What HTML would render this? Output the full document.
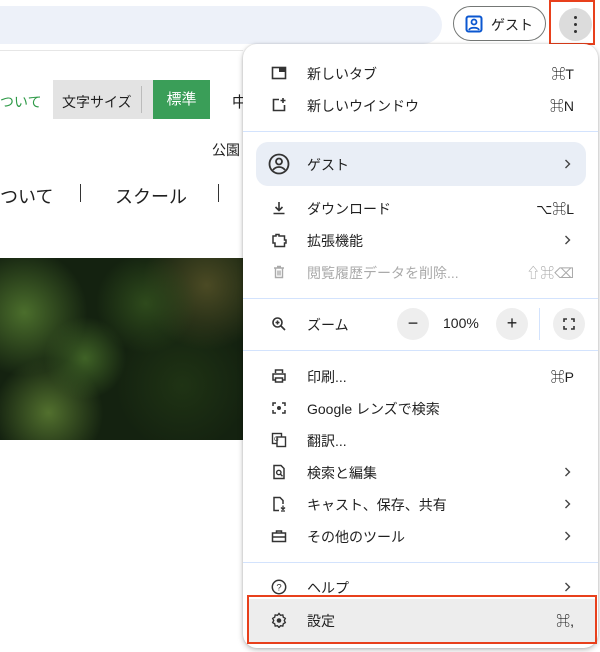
<!DOCTYPE html>
<html><head><meta charset="utf-8"><style>
body{margin:0;width:600px;height:652px;background:#fff;position:relative;overflow:hidden;font-family:"Liberation Sans","Noto Sans CJK JP",sans-serif;color:#1f1f1f}
.a{position:absolute}
.row{position:absolute;left:243px;width:355px;height:32px;font-size:14px}
.row .ic{position:absolute;left:28px;top:8px;width:16px;height:16px}
.row .t{position:absolute;left:64px;top:7px}
.row .k{position:absolute;right:24px;top:7px;font-size:14px}
.row .ch{position:absolute;right:27px;top:11px;width:7px;height:10px}
.div{position:absolute;left:243px;width:355px;height:1px;background:#d3e3fd}
</style></head><body>
<div class="a" style="left:0;top:6px;width:442px;height:38px;background:#edf1f9;border-radius:0 19px 19px 0"></div>
<div class="a" style="left:453px;top:6px;width:93px;height:35px;border:1px solid #747775;border-radius:19px;box-sizing:border-box"></div>
<svg class="a" style="left:465px;top:15px" width="18" height="18" viewBox="0 0 18 18"><rect x="1.5" y="1.5" width="15" height="15" rx="2" fill="none" stroke="#0b57d0" stroke-width="2"/><circle cx="9" cy="7" r="2.5" fill="none" stroke="#0b57d0" stroke-width="1.8"/><path d="M4 15c1-3 9-3 10 0" fill="none" stroke="#0b57d0" stroke-width="1.8"/></svg>
<div class="a" style="left:491px;top:15px;font-size:14px">ゲスト</div>
<div class="a" style="left:559px;top:8px;width:33px;height:33px;border-radius:50%;background:#dcdcdc"></div>
<div class="a" style="left:574px;top:16px;width:3px;height:3px;border-radius:50%;background:#333;box-shadow:0 7px 0 #333,0 14px 0 #333"></div>
<div class="a" style="left:549px;top:0;width:46px;height:45px;border:2px solid #e8401c;box-sizing:border-box"></div>
<div class="a" style="left:0;top:50px;width:243px;height:1px;background:#e6e6e6"></div>
<div class="a" style="left:0;top:92px;font-size:14px;color:#2f9a48">ついて</div>
<div class="a" style="left:53px;top:80px;width:100px;height:39px;background:#e3e3e3"></div>
<div class="a" style="left:62px;top:92px;font-size:14px">文字サイズ</div>
<div class="a" style="left:141px;top:86px;width:1px;height:27px;background:#bbb"></div>
<div class="a" style="left:153px;top:80px;width:57px;height:39px;background:#3a9e58;color:#fff;font-size:15px;text-align:center;line-height:39px">標準</div>
<div class="a" style="left:232px;top:91px;font-size:15px">中</div>
<div class="a" style="left:212px;top:140px;font-size:14px">公園</div>
<div class="a" style="left:0;top:183px;font-size:18px">ついて</div>
<div class="a" style="left:80px;top:184px;width:1px;height:18px;background:#333"></div>
<div class="a" style="left:115px;top:183px;font-size:18px">スクール</div>
<div class="a" style="left:218px;top:184px;width:1px;height:18px;background:#333"></div>
<div class="a" style="left:0;top:258px;width:243px;height:182px;background:radial-gradient(circle at 10% 30%,#4b6e2c 0,transparent 25%),radial-gradient(circle at 35% 55%,#3f6226 0,transparent 22%),radial-gradient(circle at 20% 85%,#52702e 0,transparent 22%),radial-gradient(circle at 60% 25%,#2e4a1c 0,transparent 25%),radial-gradient(circle at 85% 15%,#4b4a24 0,transparent 25%),radial-gradient(circle at 75% 70%,#1f3314 0,transparent 30%),#142210"></div>
<div class="a" style="left:243px;top:44px;width:355px;height:604px;background:#fff;border-radius:14px;box-shadow:0 2px 6px rgba(0,0,0,.25),0 0 2px rgba(0,0,0,.15)"></div>
<div class="row" style="top:57px"><svg class="ic" viewBox="0 0 16 16"><rect x="1.5" y="2.5" width="13" height="11" fill="none" stroke="#333" stroke-width="1.6"/><rect x="8" y="3" width="6" height="4" fill="#333"/></svg><span class="t">新しいタブ</span><span class="k">⌘T</span></div>
<div class="row" style="top:89px"><svg class="ic" viewBox="0 0 16 16"><path d="M8 2.5H2.5v11h11V8" fill="none" stroke="#333" stroke-width="1.6"/><path d="M12 1v5M9.5 3.5h5" stroke="#333" stroke-width="1.6"/></svg><span class="t">新しいウインドウ</span><span class="k">⌘N</span></div>
<div class="div" style="top:131px"></div>
<div class="a" style="left:256px;top:142px;width:330px;height:44px;background:#e9eef6;border-radius:12px"></div>
<div class="row" style="top:148px"><svg class="ic" style="left:25px;top:5px;width:22px;height:22px" viewBox="0 0 22 22"><circle cx="11" cy="11" r="9.5" fill="none" stroke="#333" stroke-width="1.8"/><circle cx="11" cy="8.5" r="3" fill="none" stroke="#333" stroke-width="1.8"/><path d="M5 17c3-4 9-4 12 0" fill="none" stroke="#333" stroke-width="1.8"/></svg><span class="t">ゲスト</span><svg class="ch" viewBox="0 0 7 10"><path d="M1.5 1l4 4-4 4" fill="none" stroke="#444" stroke-width="1.4"/></svg></div>
<div class="row" style="top:192px"><svg class="ic" viewBox="0 0 16 16"><path d="M8 2v8M4.5 7L8 10.5 11.5 7M2.5 13.5h11" fill="none" stroke="#333" stroke-width="1.6"/></svg><span class="t">ダウンロード</span><span class="k">⌥⌘L</span></div>
<div class="row" style="top:224px"><svg class="ic" viewBox="0 0 16 16"><path d="M2 4h3V2.5h3V4h5.5v4h1.5v3h-1.5v3.5H4V11H2z" fill="none" stroke="#333" stroke-width="1.5"/></svg><span class="t">拡張機能</span><svg class="ch" viewBox="0 0 7 10"><path d="M1.5 1l4 4-4 4" fill="none" stroke="#444" stroke-width="1.4"/></svg></div>
<div class="row" style="top:256px;color:#aaa"><svg class="ic" viewBox="0 0 16 16"><path d="M3 4h10M6 2.5h4M4.5 4v9.5h7V4M7 6.5v5M9 6.5v5" fill="none" stroke="#aaa" stroke-width="1.4"/></svg><span class="t">閲覧履歴データを削除...</span><span class="k" style="color:#aaa">⇧⌘⌫</span></div>
<div class="div" style="top:298px"></div>
<div class="row" style="top:308px"><svg class="ic" viewBox="0 0 16 16"><circle cx="6.5" cy="6.5" r="4.5" fill="none" stroke="#333" stroke-width="1.6"/><path d="M10 10l4 4M6.5 4.5v4M4.5 6.5h4" stroke="#333" stroke-width="1.6"/></svg><span class="t">ズーム</span></div>
<div class="a" style="left:397px;top:308px;width:32px;height:32px;border-radius:50%;background:#eee;text-align:center;line-height:31px;font-size:18px">−</div>
<div class="a" style="left:443px;top:315px;font-size:14px">100%</div>
<div class="a" style="left:496px;top:308px;width:32px;height:32px;border-radius:50%;background:#eee;text-align:center;line-height:31px;font-size:18px">+</div>
<div class="a" style="left:539px;top:308px;width:1px;height:32px;background:#d3e3fd"></div>
<div class="a" style="left:553px;top:308px;width:32px;height:32px;border-radius:50%;background:#eee"></div>
<svg class="a" style="left:563px;top:318px" width="12" height="12" viewBox="0 0 12 12"><path d="M1 4V1h3M8 1h3v3M11 8v3H8M4 11H1V8" fill="none" stroke="#333" stroke-width="1.6"/></svg>
<div class="div" style="top:350px"></div>
<div class="row" style="top:360px"><svg class="ic" viewBox="0 0 16 16"><path d="M4.5 5V2h7v3M4.5 12H2V6h12v6h-2.5M4.5 10h7v4h-7z" fill="none" stroke="#333" stroke-width="1.5"/></svg><span class="t">印刷...</span><span class="k">⌘P</span></div>
<div class="row" style="top:392px"><svg class="ic" viewBox="0 0 16 16"><path d="M2 6V3h3M11 3h3v3M14 10v3h-3M5 13H2v-3" fill="none" stroke="#333" stroke-width="1.5"/><circle cx="8" cy="8" r="2" fill="#333"/></svg><span class="t">Google レンズで検索</span></div>
<div class="row" style="top:424px"><svg class="ic" viewBox="0 0 16 16"><rect x="1.5" y="1.5" width="9" height="10" fill="none" stroke="#333" stroke-width="1.4"/><rect x="6" y="5" width="8.5" height="9.5" fill="#fff" stroke="#333" stroke-width="1.4"/><text x="3" y="9" font-size="6" fill="#333">G</text></svg><span class="t">翻訳...</span></div>
<div class="row" style="top:456px"><svg class="ic" viewBox="0 0 16 16"><path d="M3 1.5h7l3 3v10H3z" fill="none" stroke="#333" stroke-width="1.5"/><circle cx="7.8" cy="8.5" r="2.2" fill="none" stroke="#333" stroke-width="1.4"/><path d="M9.5 10.2l2 2" stroke="#333" stroke-width="1.4"/></svg><span class="t">検索と編集</span><svg class="ch" viewBox="0 0 7 10"><path d="M1.5 1l4 4-4 4" fill="none" stroke="#444" stroke-width="1.4"/></svg></div>
<div class="row" style="top:488px"><svg class="ic" viewBox="0 0 16 16"><path d="M8 14.5H3v-13h6l3 3V8" fill="none" stroke="#333" stroke-width="1.5"/><path d="M12 9.5v4M10 11.5l2 2 2-2M10 15h4" fill="none" stroke="#333" stroke-width="1.3"/></svg><span class="t">キャスト、保存、共有</span><svg class="ch" viewBox="0 0 7 10"><path d="M1.5 1l4 4-4 4" fill="none" stroke="#444" stroke-width="1.4"/></svg></div>
<div class="row" style="top:520px"><svg class="ic" viewBox="0 0 16 16"><rect x="1.5" y="5" width="13" height="8.5" fill="none" stroke="#333" stroke-width="1.5"/><path d="M5.5 5V3h5v2M1.5 9h13" fill="none" stroke="#333" stroke-width="1.5"/></svg><span class="t">その他のツール</span><svg class="ch" viewBox="0 0 7 10"><path d="M1.5 1l4 4-4 4" fill="none" stroke="#444" stroke-width="1.4"/></svg></div>
<div class="div" style="top:562px"></div>
<div class="row" style="top:571px"><svg class="ic" viewBox="0 0 16 16"><circle cx="8" cy="8" r="6.7" fill="none" stroke="#333" stroke-width="1.5"/><text x="8" y="11.5" font-size="9.5" text-anchor="middle" fill="#333" font-family="Liberation Sans">?</text></svg><span class="t">ヘルプ</span><svg class="ch" viewBox="0 0 7 10"><path d="M1.5 1l4 4-4 4" fill="none" stroke="#444" stroke-width="1.4"/></svg></div>
<div class="a" style="left:249px;top:599px;width:346px;height:43px;background:#ededed"></div>
<div class="row" style="top:604px"><svg class="ic" viewBox="0 0 16 16"><path d="M8 1.5l1.5 1.8 2.3-.4.5 2.3 2 1.2-1 2.1 1 2.1-2 1.2-.5 2.300-2.3-.4L8 15.5l-1.5-1.8-2.3.4-.5-2.3-2-1.2 1-2.1-1-2.1 2-1.2.5-2.3 2.3.4z" fill="none" stroke="#333" stroke-width="1.4"/><circle cx="8" cy="8.5" r="2.3" fill="#333"/></svg><span class="t">設定</span><span class="k">⌘,</span></div>
<div class="a" style="left:247px;top:595px;width:350px;height:49px;border:2px solid #e8401c;box-sizing:border-box"></div>
</body></html>
